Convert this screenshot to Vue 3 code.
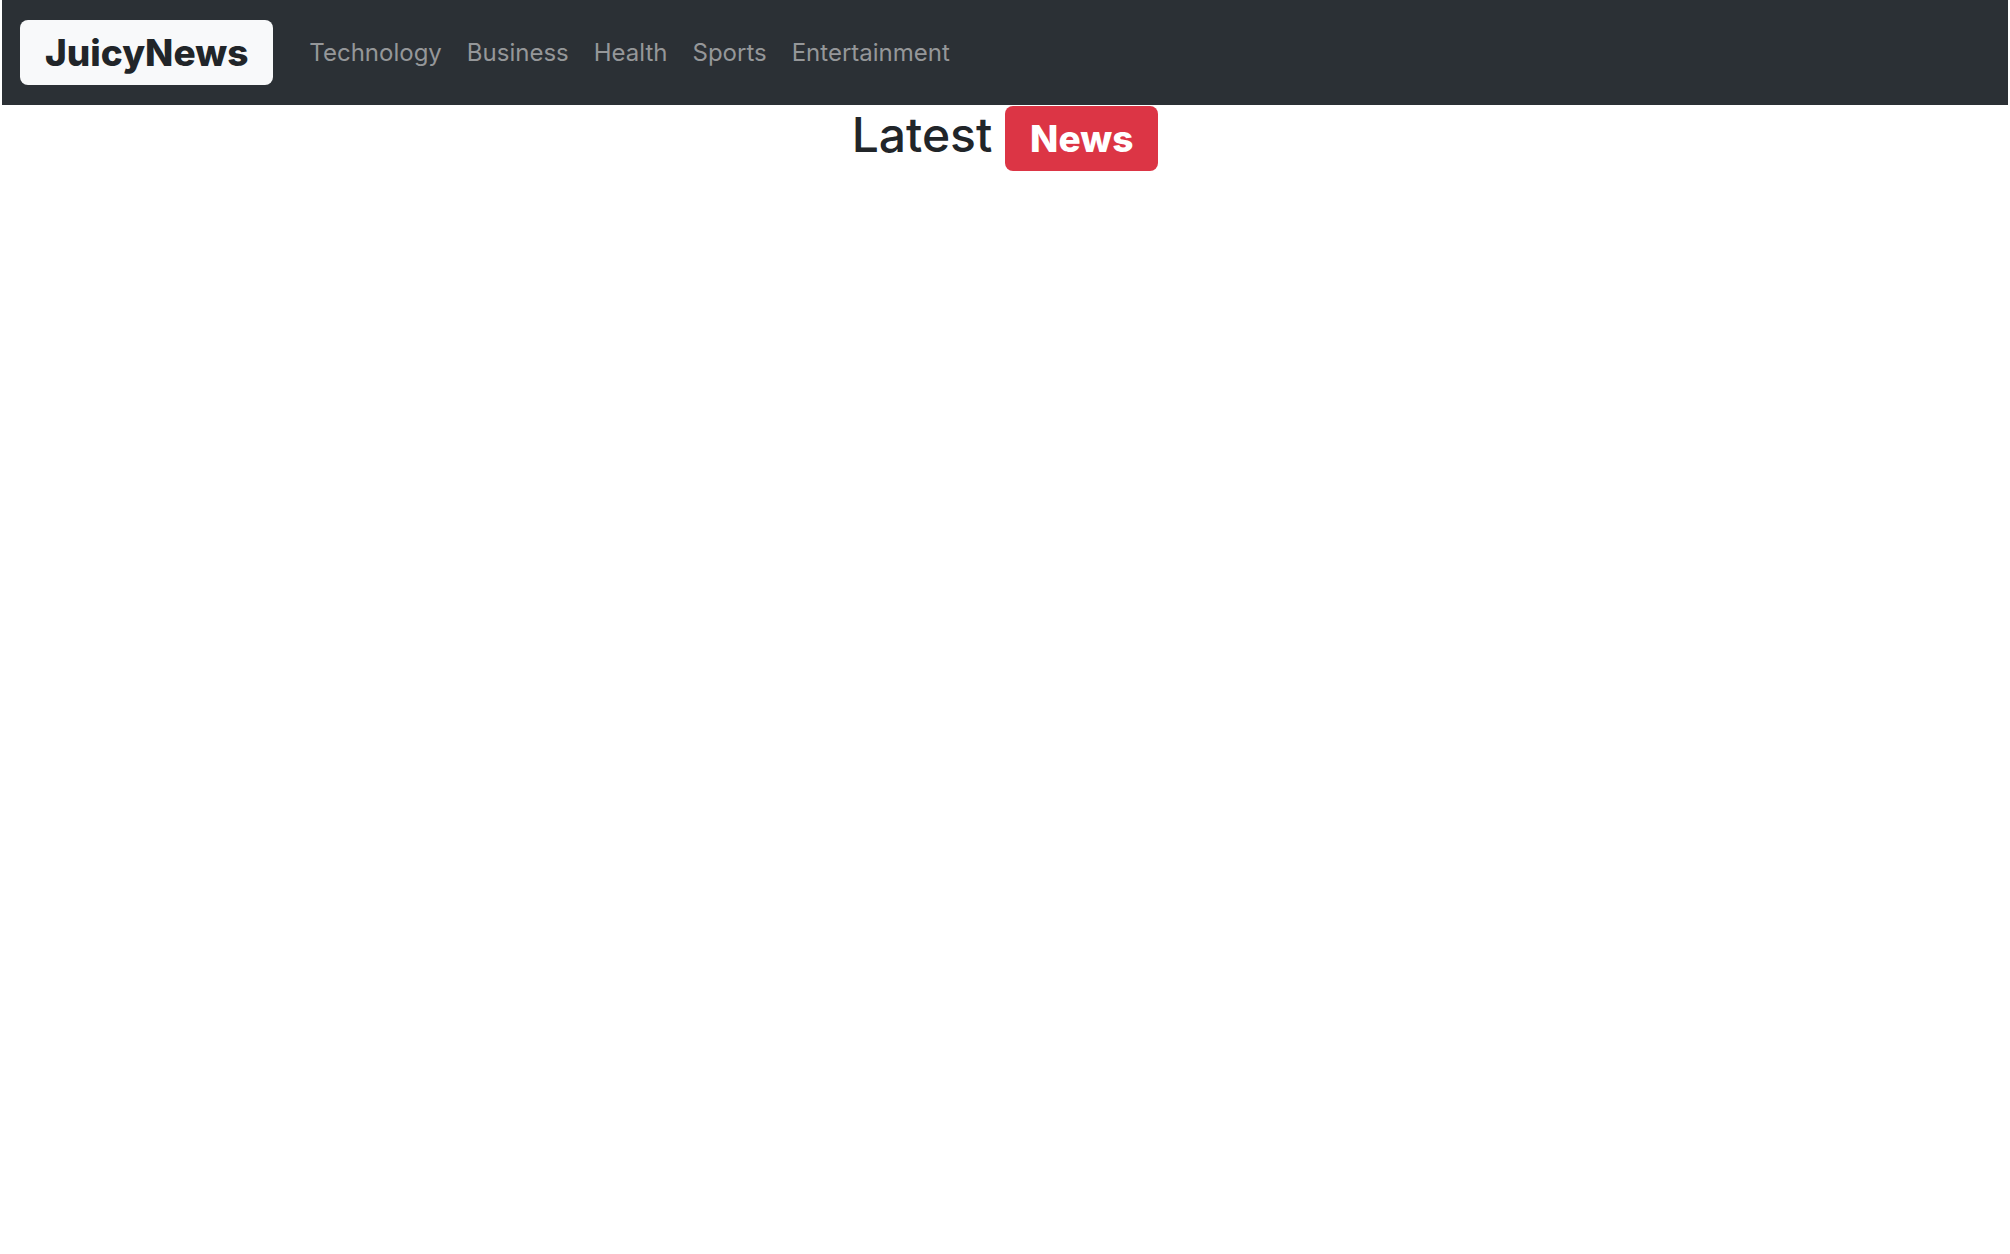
<script setup>
const categories = ['Technology', 'Business', 'Health', 'Sports', 'Entertainment']
</script>

<template>
  <nav class="navbar">
    <a class="brand" href="#"><span class="badge badge-light">JuicyNews</span></a>
    <ul class="nav">
      <li v-for="name in categories" :key="name">
        <a class="nav-link" href="#">{{ name }}</a>
      </li>
    </ul>
  </nav>
  <main>
    <h2 class="heading">Latest <span class="badge badge-danger">News</span></h2>
  </main>
</template>

<style>
body {
  margin: 0;
  background: #fff;
}
</style>

<style scoped>
.navbar,
.heading {
  font-family: Inter, "Liberation Sans", sans-serif;
}

.navbar {
  display: flex;
  align-items: center;
  gap: 36px;
  margin: 0 2px;
  padding: 20px 18px;
  background: #2b3035;
}

.brand {
  display: flex;
  text-decoration: none;
}

.badge {
  display: inline-block;
  padding: 13px 25px;
  border-radius: 8px;
  font-size: 37px;
  font-weight: 800;
  line-height: 39px;
}

.badge-light {
  background: #f8f9fa;
  color: #212529;
}

.badge-danger {
  background: #dc3545;
  color: #fff;
}

.nav {
  display: flex;
  gap: 25px;
  margin: 0;
  padding: 0;
  list-style: none;
}

.nav-link {
  display: block;
  padding: 12px 0;
  color: #959799;
  font-size: 24px;
  line-height: 38px;
  text-decoration: none;
}

.heading {
  margin: 0;
  color: #212529;
  font-size: 48px;
  font-weight: 500;
  line-height: 60px;
  text-align: center;
}
</style>
